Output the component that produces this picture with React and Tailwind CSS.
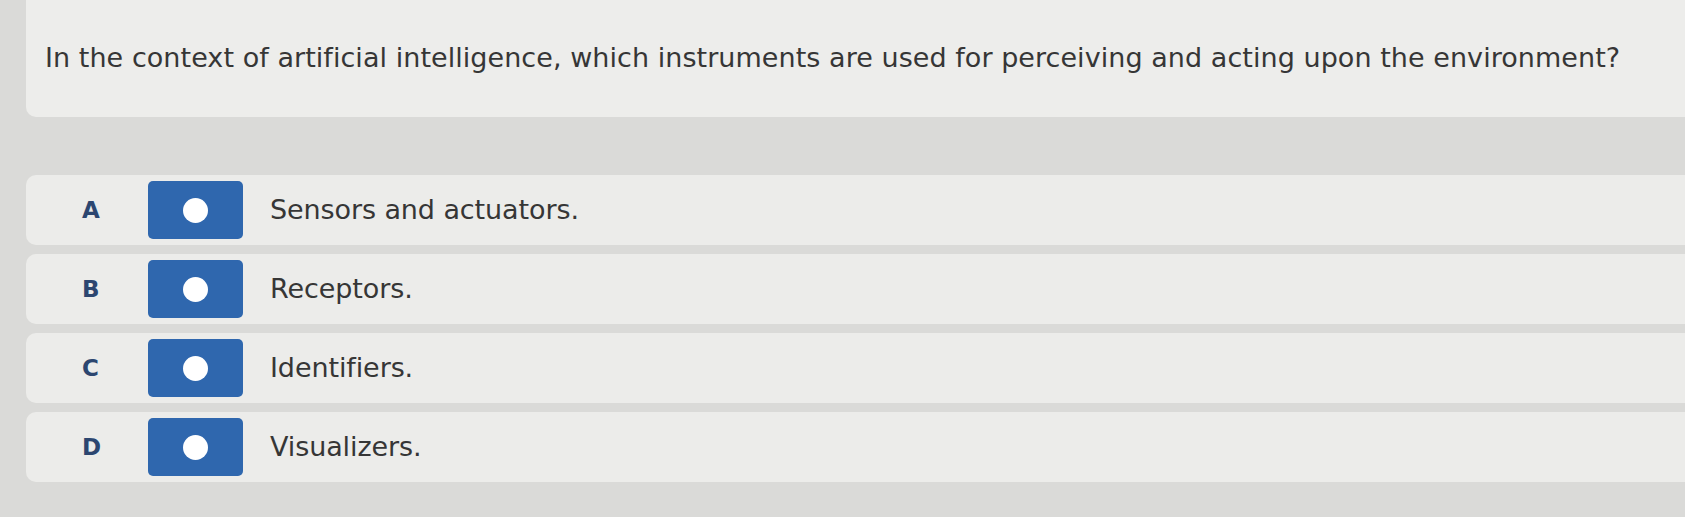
const options = [
  { key: 'A', text: 'Sensors and actuators.' },
  { key: 'B', text: 'Receptors.' },
  { key: 'C', text: 'Identifiers.' },
  { key: 'D', text: 'Visualizers.' },
]

function RadioBox() {
  return (
    <div className="w-[95px] h-[58px] rounded-[5px] bg-[#2f67ae] flex items-center justify-center">
      <div className="w-[25px] h-[25px] rounded-full bg-white" />
    </div>
  )
}

export default function App() {
  return (
    <div className="w-[1685px] h-[517px] overflow-hidden bg-[#dadad8] pl-[26px] font-['DejaVu_Sans',sans-serif] text-[#363636]">
      <div className="h-[117px] bg-[#ededeb] rounded-bl-[10px] pl-[19px] pt-[42px]">
        <p className="text-[27px] tracking-[0.05px] leading-[32px] whitespace-nowrap">
          In the context of artificial intelligence, which instruments are used for perceiving and acting upon the environment?
        </p>
      </div>

      <div className="mt-[58px] flex flex-col gap-[9px]">
        {options.map((o) => (
          <div key={o.key} className="h-[70px] bg-[#ececea] rounded-l-[10px] flex items-center">
            <span className="w-[122px] pl-[56px] text-[23px] font-bold text-[#2c4670]">{o.key}</span>
            <RadioBox />
            <span className="ml-[27px] text-[27px] tracking-[-0.1px]">{o.text}</span>
          </div>
        ))}
      </div>
    </div>
  )
}
